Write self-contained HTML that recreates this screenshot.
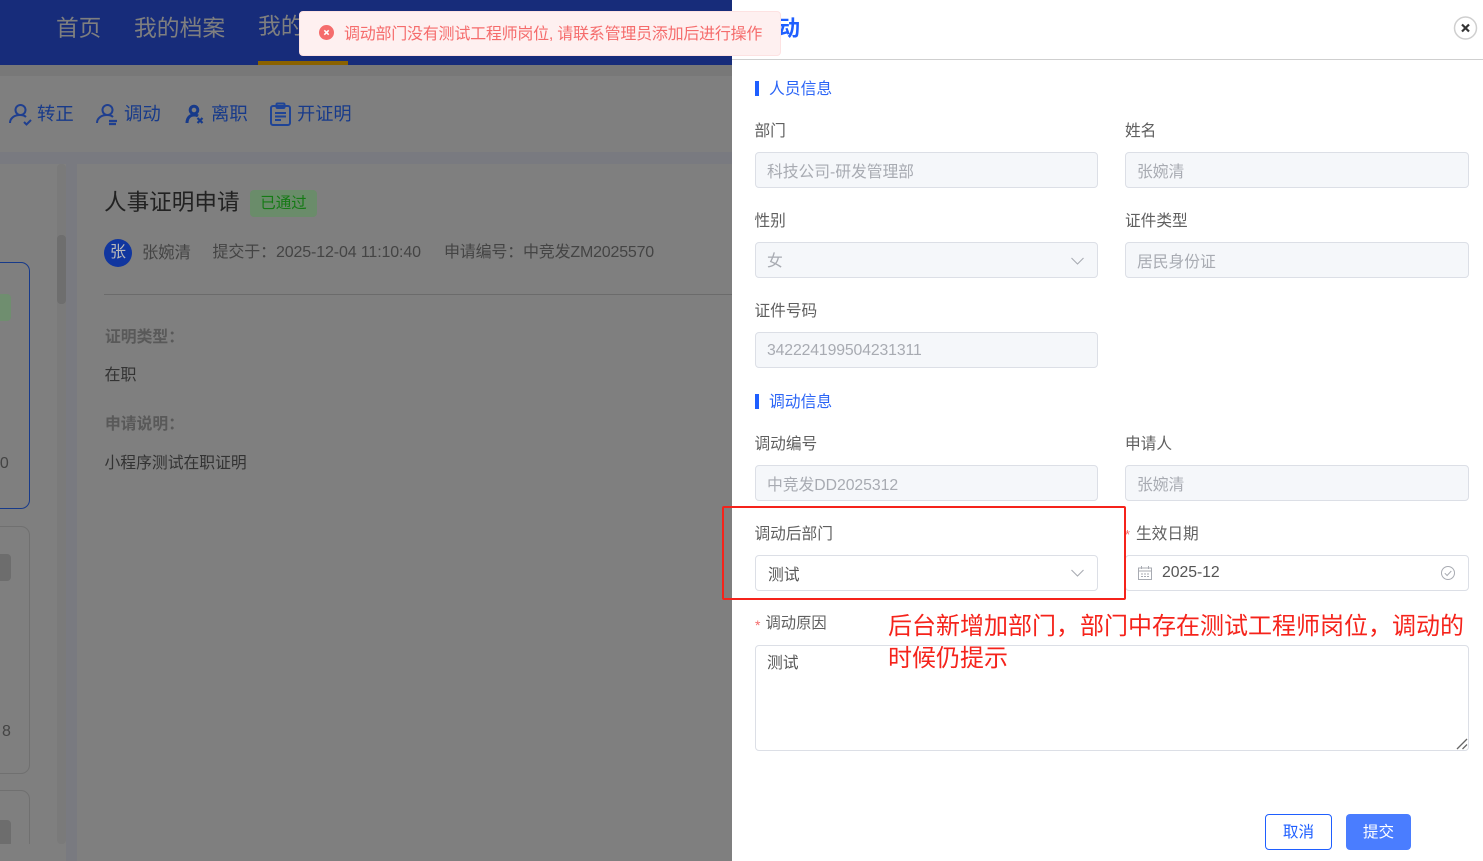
<!DOCTYPE html>
<html lang="zh-CN"><head><meta charset="utf-8"><title>调动</title>
<style>
*{box-sizing:border-box}
html,body{margin:0;padding:0;width:1483px;height:861px;overflow:hidden;background:#7f7f7f}
body{position:relative;font-family:"Liberation Sans","Noto Sans CJK SC",sans-serif;font-size:16px;color:#333}
.a,.t,.box{position:absolute}
.t{white-space:nowrap;line-height:24px;height:24px}
.lab{color:#5f5f5f;font-size:15.7px}
.box{width:343px;height:36px;border:1px solid #dcdfe6;border-radius:4px;background:#f5f7fa;color:#a8abb2;padding:3px 11px 0;line-height:34px;font-size:15.8px;white-space:nowrap;letter-spacing:-.05px}
.w{background:#fff;color:#555}
.sec{color:#2a64f6;font-size:15.8px}
.bar{position:absolute;left:755px;width:4px;height:15px;background:#1f5fff}
.req{color:#f56c6c}
.d{letter-spacing:-.13px}
svg{position:absolute;overflow:visible}
</style></head><body>

<!-- top nav -->
<div class="a" style="left:0;top:0;width:732px;height:65px;background:#172c7a"></div>
<div class="t" style="left:56px;top:12px;font-size:22.7px;line-height:32px;height:32px;color:#7f7f7f">首页</div>
<div class="t" style="left:134px;top:12px;font-size:22.8px;line-height:32px;height:32px;color:#7f7f7f">我的档案</div>
<div class="t" style="left:258px;top:10px;font-size:22.8px;line-height:32px;height:32px;color:#7f7f7f">我的</div>
<div class="a" style="left:258px;top:61px;width:90px;height:4px;background:#8a6200"></div>

<!-- bands -->
<div class="a" style="left:0;top:65px;width:732px;height:11px;background:#787878"></div>
<div class="a" style="left:0;top:152px;width:732px;height:12px;background:#797a80"></div>
<div class="a" style="left:66px;top:164px;width:11px;height:697px;background:#797a80"></div>
<div class="a" style="left:57px;top:164px;width:9px;height:680px;background:#7a7a7a;border-radius:4px"></div>
<div class="a" style="left:57px;top:235px;width:9px;height:69px;background:#6e6e6e;border-radius:4px"></div>

<!-- toolbar -->
<svg style="left:9px;top:103px" width="22" height="22" viewBox="0 0 22 22" fill="none" stroke="#1f3f8f" stroke-width="2"><circle cx="11.500" cy="7" r="5"/><path d="M1 20c0-4.500 4-8 10-8 2.500 0 4.500.5 6 2"/><path d="M15 19l2.500 2.500L22 17"/></svg>
<div class="t" style="left:37px;top:102px;font-size:18.400px;color:#173a8a">转正</div>
<svg style="left:96px;top:103px" width="22" height="22" viewBox="0 0 22 22" fill="none" stroke="#1f3f8f" stroke-width="2"><circle cx="11.500" cy="7" r="5"/><path d="M1 20c0-4.500 4-8 10-8 2.500 0 4.500.5 6 2"/><path d="M13 18h8M13 21h7" stroke-width="2.200"/></svg>
<div class="t" style="left:124px;top:102px;font-size:18.400px;color:#173a8a">调动</div>
<svg style="left:185px;top:104px" width="20" height="20" viewBox="0 0 20 20" fill="none" stroke="#173a8a" stroke-width="3"><circle cx="9" cy="6" r="3.800"/><path d="M2 19c0-5 3-8 7-8 2 0 3 .3 4 1"/><path d="M12.500 14l5 5M17.500 14l-5 5" stroke-width="2.200"/></svg>
<div class="t" style="left:211px;top:102px;font-size:18.400px;color:#173a8a">离职</div>
<svg style="left:269px;top:102px" width="23" height="24" viewBox="0 0 23 24" fill="none" stroke="#1f4496" stroke-width="2"><rect x="2" y="4" width="19" height="19" rx="2"/><rect x="7.500" y="1.500" width="8" height="4.500" rx="1"/><path d="M6 11h11M6 14.500h11M6 18h6"/></svg>
<div class="t" style="left:297px;top:102px;font-size:18.200px;color:#173a8a">开证明</div>

<!-- left list cards -->
<div class="a" style="left:-20px;top:262px;width:50px;height:247px;border:1px solid #173a8a;border-radius:9px"></div>
<div class="a" style="left:-10px;top:294px;width:21px;height:27px;background:#6f8e6f;border-radius:4px"></div>
<div class="t" style="left:-9px;top:452px;color:#444">40</div>
<div class="a" style="left:-20px;top:526px;width:50px;height:248px;border:1px solid #707070;border-radius:9px"></div>
<div class="a" style="left:-10px;top:554px;width:21px;height:27px;background:#6d6d6d;border-radius:4px"></div>
<div class="t" style="left:2px;top:720px;color:#444">8</div>
<div class="a" style="left:-20px;top:790px;width:50px;height:90px;border:1px solid #707070;border-radius:9px"></div>
<div class="a" style="left:-10px;top:820px;width:21px;height:27px;background:#6d6d6d;border-radius:4px"></div>
<div class="a" style="left:0;top:844px;width:66px;height:17px;background:#7f7f7f"></div>

<!-- detail -->
<div class="t" style="left:104px;top:187px;font-size:22.600px;line-height:32px;height:32px;color:#222">人事证明申请</div>
<div class="a" style="left:250px;top:190px;width:67px;height:27px;background:#6a8c6a;border-radius:4px;color:#157a15;font-size:15.500px;line-height:27px;text-align:center">已通过</div>
<div class="a" style="left:104px;top:239px;width:28px;height:28px;border-radius:50%;background:#11369f;color:#b9b9b9;text-align:center;line-height:28px;font-size:16px">张</div>
<div class="t" style="left:142px;top:241px;color:#444;font-size:16.300px">张婉清</div>
<div class="t d" style="left:212.500px;top:241px;color:#444">提交于：2025-12-04 11:10:40</div>
<div class="t d" style="left:444px;top:241px;color:#444;letter-spacing:-.2px">申请编号：中竞发ZM2025570</div>
<div class="a" style="left:104px;top:294px;width:628px;height:1px;background:#6b6b6b"></div>
<div class="t" style="left:105px;top:326px;font-weight:700;color:#595959;font-size:15.800px">证明类型：</div>
<div class="t" style="left:104.500px;top:364px;color:#333">在职</div>
<div class="t" style="left:105px;top:413px;font-weight:700;color:#595959;font-size:15.800px">申请说明：</div>
<div class="t" style="left:104.500px;top:452px;color:#333;font-size:15.800px">小程序测试在职证明</div>

<!-- drawer -->
<div class="a" style="left:732px;top:0;width:751px;height:861px;background:#fff"></div>
<div class="a" style="left:732px;top:59px;width:751px;height:1px;background:#cfcfcf"></div>
<div class="t" style="left:778px;top:13px;font-size:22px;line-height:32px;height:32px;font-weight:700;color:#1f5fff">动</div>
<svg style="left:1453px;top:16px" width="25" height="24" viewBox="0 0 25 24" fill="none"><circle cx="12.500" cy="12" r="11" stroke="#cfcfcf" stroke-width="1.500"/><path d="M9 8.500l7 7M16 8.500l-7 7" stroke="#333" stroke-width="2.200"/></svg>

<div class="bar" style="top:81px"></div>
<div class="t sec" style="left:769px;top:78px">人员信息</div>
<div class="t lab" style="left:754.500px;top:120px">部门</div>
<div class="t lab" style="left:1125px;top:120px">姓名</div>
<div class="box" style="left:755px;top:152px">科技公司-研发管理部</div>
<div class="box" style="left:1125px;top:152px;width:344px">张婉清</div>
<div class="t lab" style="left:754.500px;top:210px">性别</div>
<div class="t lab" style="left:1125px;top:210px">证件类型</div>
<div class="box" style="left:755px;top:242px;padding-top:2px">女</div>
<svg style="left:1071px;top:257px" width="13" height="8" viewBox="0 0 13 8" fill="none" stroke="#a8abb2" stroke-width="1.100"><path d="M.5 1l6 6 6-6"/></svg>
<div class="box" style="left:1125px;top:242px;width:344px">居民身份证</div>
<div class="t lab" style="left:754.500px;top:300px">证件号码</div>
<div class="box" style="left:755px;top:332px;padding-top:1px;letter-spacing:-.13px">342224199504231311</div>

<div class="bar" style="top:394px"></div>
<div class="t sec" style="left:769px;top:391px">调动信息</div>
<div class="t lab" style="left:754.500px;top:433px">调动编号</div>
<div class="t lab" style="left:1125px;top:433px">申请人</div>
<div class="box" style="left:755px;top:465px">中竞发DD2025312</div>
<div class="box" style="left:1125px;top:465px;width:344px">张婉清</div>

<div class="t lab" style="left:754.500px;top:523px">调动后部门</div>
<div class="box w" style="left:755px;top:555px;padding-left:12px">测试</div>
<svg style="left:1071px;top:569px" width="13" height="8" viewBox="0 0 13 8" fill="none" stroke="#a8abb2" stroke-width="1.100"><path d="M.5 1l6 6 6-6"/></svg>

<div class="t req" style="left:1125px;top:523px;font-size:13px">*</div>
<div class="t lab" style="left:1136px;top:523px">生效日期</div>
<div class="box w" style="left:1125px;top:555px;width:344px;padding-left:36px;padding-top:0;line-height:33px;color:#555">2025-12</div>
<svg style="left:1138px;top:566px" width="14" height="14" viewBox="0 0 14 14" fill="none" stroke="#a8abb2" stroke-width="1"><rect x=".5" y="2" width="13" height="11.500"/><path d="M.5 5h13M3.500 0v3M10.500 0v3M3 8h2M6 8h2M9 8h2M3 10.500h2M6 10.500h2M9 10.500h2"/></svg>
<svg style="left:1441px;top:566px" width="14" height="14" viewBox="0 0 14 14" fill="none" stroke="#a8abb2" stroke-width="1"><circle cx="7" cy="7" r="6.500"/><path d="M3.800 7.200l2.300 2.300 4.200-4.500"/></svg>

<div class="a" style="left:722px;top:506px;width:404px;height:94px;border:2px solid #f5231b;border-radius:2px"></div>

<div class="t req" style="left:755px;top:613px;font-size:14px">*</div>
<div class="t lab" style="left:765.500px;top:612px;font-size:15.300px">调动原因</div>
<div class="box w" style="left:755px;top:645px;width:714px;height:106px;line-height:34px;padding:1px 11px 0">测试</div>
<svg style="left:1456px;top:738px" width="12" height="12" viewBox="0 0 12 12" fill="none" stroke="#666" stroke-width="1.300"><path d="M1 11L11 1M6.500 11L11 6.500"/></svg>

<div class="t" style="left:888px;top:611px;font-size:24px;line-height:32px;height:32px;color:#f5231b">后台新增加部门，部门中存在测试工程师岗位，调动的</div>
<div class="t" style="left:888px;top:643px;font-size:24px;line-height:32px;height:32px;color:#f5231b">时候仍提示</div>

<div class="a" style="left:1265px;top:814px;width:67px;height:36px;border:1px solid #1f5fff;border-radius:4px;background:#fff;color:#1f5fff;text-align:center;line-height:36px;font-size:15.600px">取消</div>
<div class="a" style="left:1346px;top:814px;width:65px;height:36px;border-radius:4px;background:#4a7dff;color:#fff;text-align:center;line-height:37px;font-size:15.600px">提交</div>

<!-- toast -->
<div class="a" style="left:299px;top:11px;width:482px;height:45px;background:#fef0f0;border:1px solid #fde2e2;border-radius:4px"></div>
<svg style="left:319px;top:25px" width="15" height="15" viewBox="0 0 15 15" fill="none"><circle cx="7.500" cy="7.500" r="7.500" fill="#f56c6c"/><path d="M5.300 5.300l4.400 4.400M9.700 5.300l-4.400 4.400" stroke="#fff" stroke-width="1.500"/></svg>
<div class="t" style="left:344px;top:23px;color:#f56c6c;font-size:16px;letter-spacing:-.24px">调动部门没有测试工程师岗位, 请联系管理员添加后进行操作</div>

</body></html>
